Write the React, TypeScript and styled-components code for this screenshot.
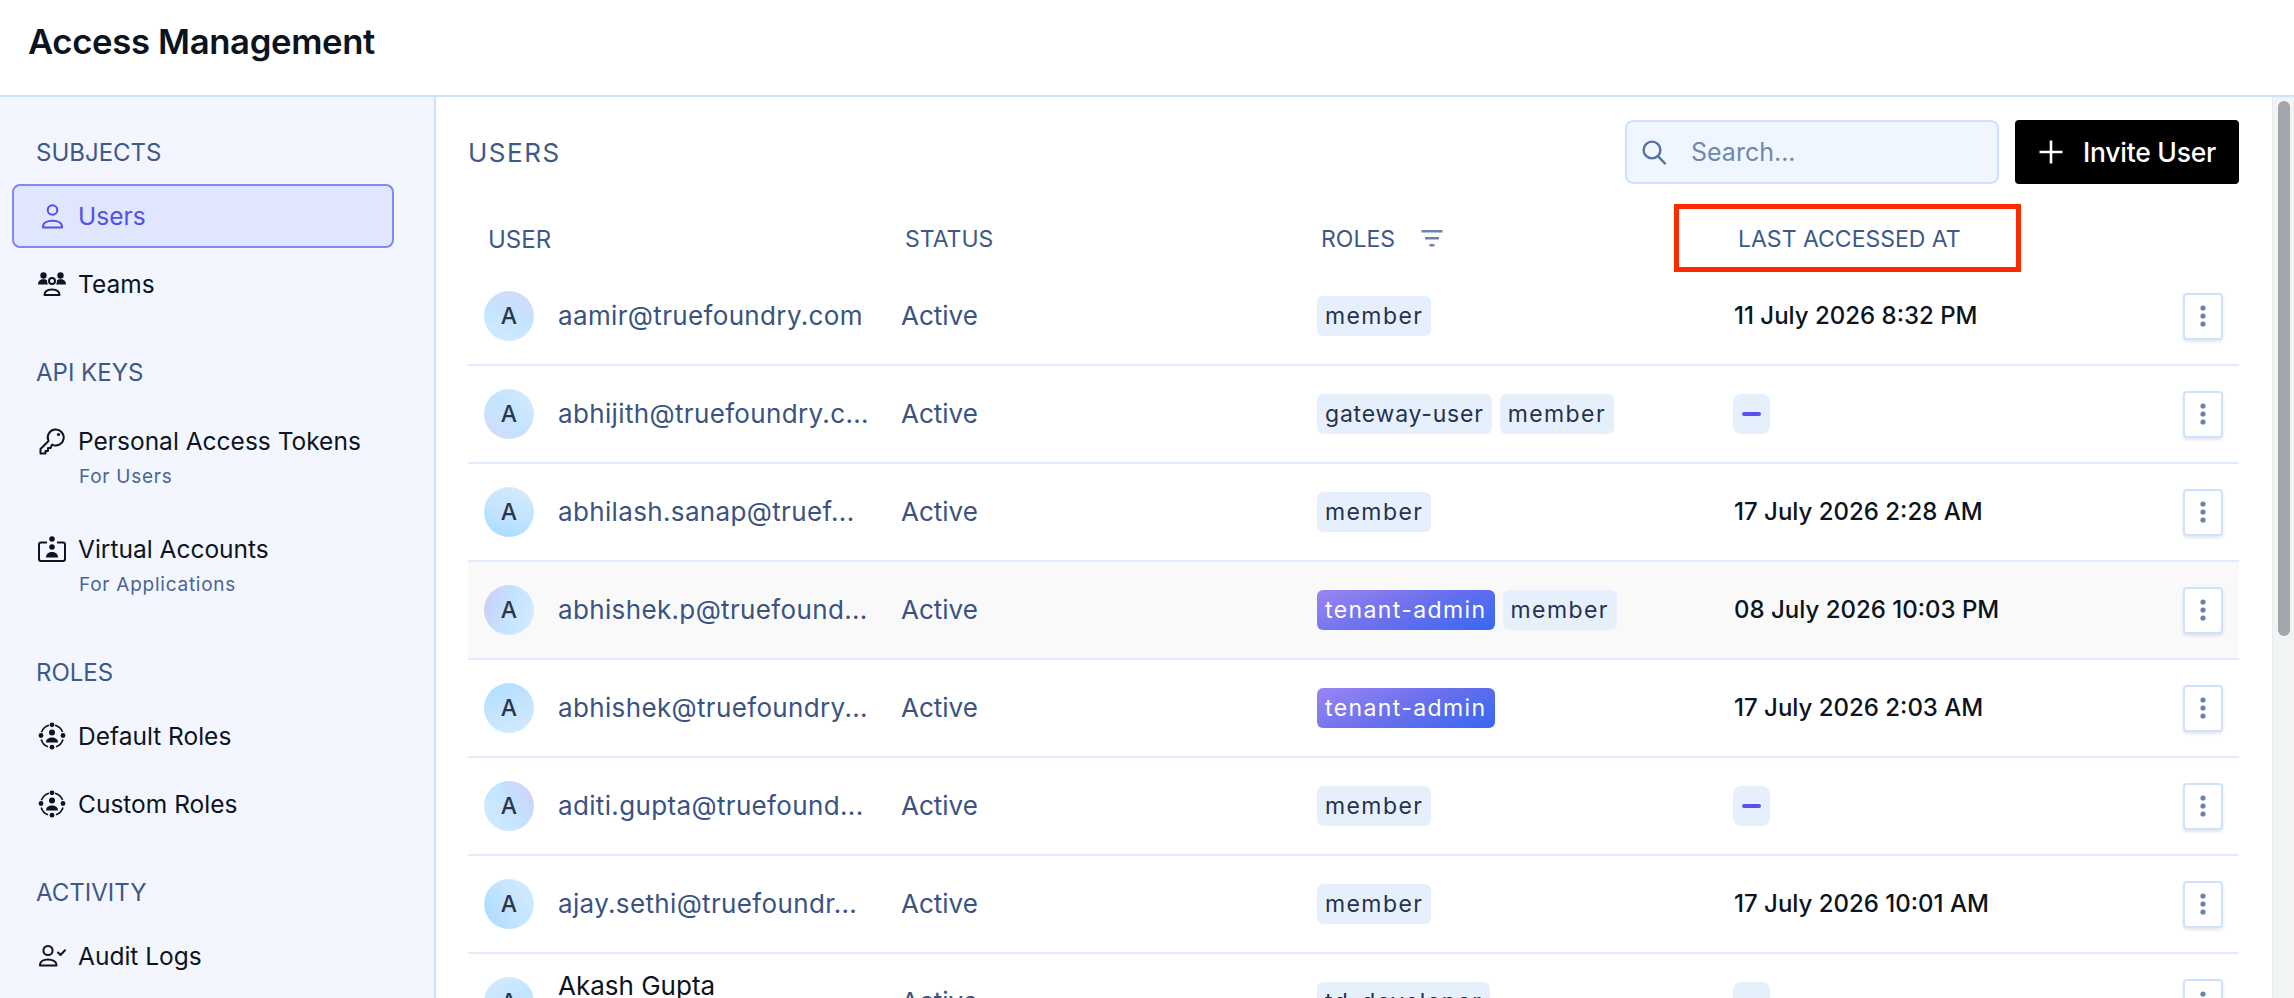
import React from "react";
import styled, { createGlobalStyle } from "styled-components";

const Global = createGlobalStyle`
  html, body { margin: 0; padding: 0; background: #fff; }
  body { font-family: Inter, "Noto Sans", sans-serif; overflow: hidden; }
  * { box-sizing: border-box; }
`;

const Page = styled.div`
  width: 2294px;
  height: 998px;
  display: flex;
  flex-direction: column;
  overflow: hidden;
`;
const TopBar = styled.header`
  height: 97px;
  flex: none;
  display: flex;
  align-items: center;
  padding: 0 0 13px 28px;
  border-bottom: 2px solid #cfe2fd;
`;
const Title = styled.h1`
  margin: 0;
  font-size: 34.7px;
  font-weight: 600;
  letter-spacing: -0.35px;
  color: #0b1420;
`;
const Body = styled.div`
  flex: 1;
  display: flex;
  min-height: 0;
`;
const Sidebar = styled.nav`
  width: 436px;
  flex: none;
  background: #f3f6ff;
  border-right: 2px solid #cfe2fd;
  padding: 37px 40px 0 12px;
  display: flex;
  flex-direction: column;
  gap: 38px;
`;
const Section = styled.section`
  display: flex;
  flex-direction: column;
  gap: 4px;
`;
const SectionLabel = styled.div`
  height: 36px;
  margin-bottom: 10px;
  padding-left: 24px;
  display: flex;
  align-items: center;
  font-size: 24px;
  font-weight: 400;
  color: #3d5987;
`;
const Item = styled.div<{ $active?: boolean }>`
  height: 64px;
  display: flex;
  align-items: center;
  gap: 12px;
  padding-left: 24px;
  border-radius: 8px;
  border: 2px solid ${(p) => (p.$active ? "#8088f5" : "transparent")};
  background: ${(p) => (p.$active ? "#e0e6fd" : "transparent")};
  color: ${(p) => (p.$active ? "#5350ea" : "#0b1420")};
  font-size: 24.5px;
  font-weight: 400;
`;
const TallItem = styled.div`
  height: 104px;
  padding: 17px 0 0 24px;
  border: 2px solid transparent;
  display: grid;
  grid-template-columns: 28px 1fr;
  grid-template-rows: 36px 34px;
  column-gap: 12px;
  align-items: center;
  color: #0b1420;
  font-size: 24.5px;
`;
const SubText = styled.div`
  grid-column: 2;
  padding-left: 1px;
  font-size: 19px;
  letter-spacing: 0.75px;
  color: #4a6592;
`;
const Main = styled.main`
  flex: 1;
  min-width: 0;
  padding: 23px 33px 0 32px;
`;
const Toolbar = styled.div`
  display: flex;
  align-items: center;
  gap: 16px;
  height: 64px;
`;
const Heading = styled.h2`
  margin: 0 auto 0 0;
  font-size: 26px;
  font-weight: 400;
  letter-spacing: 1.5px;
  color: #3d5987;
`;
const Search = styled.div`
  width: 374px;
  height: 64px;
  display: flex;
  align-items: center;
  gap: 24px;
  padding-left: 14px;
  background: #eff6ff;
  border: 2px solid #cfe2fd;
  border-radius: 8px;
  font-size: 25px;
  color: #7088ac;
`;
const InviteButton = styled.button`
  width: 224px;
  height: 64px;
  display: flex;
  align-items: center;
  gap: 20px;
  padding: 0 0 0 24px;
  background: #000;
  color: #fff;
  border: 0;
  border-radius: 4px;
  font-family: inherit;
  font-size: 26.5px;
  font-weight: 500;
  letter-spacing: -0.25px;
`;
const Columns = `433px 416px 417px 1fr 56px`;
const HeadRow = styled.div`
  display: grid;
  grid-template-columns: ${Columns};
  height: 36px;
  margin: 37px 0 11px;
  align-items: center;
  font-size: 23px;
  color: #3d5987;
`;
const HeadCell = styled.div`
  position: relative;
  height: 36px;
  display: flex;
  align-items: center;
  gap: 26px;
  padding-left: 4px;
`;
const UserHeadCell = styled(HeadCell)`
  padding-left: 20px;
  font-size: 24px;
`;
const Annotation = styled.div`
  position: absolute;
  left: -60px;
  top: -17px;
  width: 347px;
  height: 68px;
  border: 5px solid #ff2a00;
  pointer-events: none;
`;
const Row = styled.div<{ $hover?: boolean }>`
  display: grid;
  grid-template-columns: ${Columns};
  height: 98px;
  align-items: center;
  border-bottom: 2px solid #e0ebfd;
  background: ${(p) => (p.$hover ? "#f9f9f9" : "#fff")};
`;
const UserCell = styled.div`
  display: flex;
  align-items: center;
  gap: 24px;
  padding-left: 16px;
`;
const Avatar = styled.div<{ $end: string; $angle: number }>`
  width: 50px;
  height: 50px;
  flex: none;
  border-radius: 50%;
  display: flex;
  align-items: center;
  justify-content: center;
  background: linear-gradient(${(p) => p.$angle}deg, #d6ebfe 0%, #c3e4ff 50%, ${(p) => p.$end} 100%);
  font-size: 23px;
  font-weight: 500;
  color: #2d3648;
`;
const Email = styled.div`
  padding-bottom: 2px;
  font-size: 26px;
  letter-spacing: 0.35px;
  color: #3a5380;
  white-space: nowrap;
`;
const NameStack = styled.div`
  display: flex;
  flex-direction: column;
`;
const PersonName = styled.div`
  font-size: 26px;
  line-height: 36px;
  color: #0b1420;
`;
const Status = styled.div`
  padding-bottom: 2px;
  font-size: 26px;
  color: #3a5380;
`;
const Pills = styled.div`
  display: flex;
  gap: 8px;
`;
const Pill = styled.span<{ $admin?: boolean; $spacing: number }>`
  height: 40px;
  display: inline-flex;
  align-items: center;
  padding: 0 8px;
  border-radius: 6px;
  font-size: 23px;
  letter-spacing: ${(p) => p.$spacing}px;
  background: ${(p) => (p.$admin ? "linear-gradient(155deg, #9b85f3 0%, #6a70ec 50%, #3668f0 100%)" : "#e6f0fd")};
  color: ${(p) => (p.$admin ? "#fff" : "#27324a")};
`;
const DateText = styled.div`
  padding-bottom: 2px;
  font-size: 24px;
  font-weight: 500;
  color: #0b1420;
`;
const DashPill = styled.div`
  width: 37px;
  height: 40px;
  margin-left: -1px;
  display: flex;
  align-items: center;
  justify-content: center;
  border-radius: 8px;
  background: #e6f0fd;
`;
const Dash = styled.div`
  width: 19px;
  height: 4px;
  border-radius: 2px;
  background: #5b50ec;
`;
const Kebab = styled.button`
  width: 40px;
  height: 47px;
  padding: 0;
  display: flex;
  align-items: center;
  justify-content: center;
  background: #fff;
  border: 2px solid #cfe2fd;
  border-radius: 4px;
  box-shadow: 0 2px 3px rgba(30, 60, 120, 0.12);
`;
const ScrollTrack = styled.div`
  width: 22px;
  flex: none;
  background: #f2f4f4;
  border-left: 1px solid #e8ebeb;
  padding: 4px 4px 0 5px;
`;
const ScrollThumb = styled.div`
  height: 535px;
  border-radius: 6px;
  background: #a3a5ad;
`;

const Glyph = styled.svg`
  width: 28px;
  height: 28px;
  flex: none;
  display: block;
`;
const stroke = { fill: "none", stroke: "currentColor", strokeWidth: 2 } as const;

const UserIcon = () => (
  <Glyph viewBox="0 0 28 28">
    <circle cx="14.5" cy="8" r="4.8" {...stroke} />
    <path d="M5 25.5v-.8c0-3.7 4-6 9.5-6s9.5 2.3 9.5 6v.8z" {...stroke} strokeLinejoin="round" />
  </Glyph>
);
const TeamIcon = () => (
  <Glyph viewBox="0 0 28 28">
    <circle cx="14" cy="11" r="3" {...stroke} />
    <path d="M6.5 25c0-3.7 3.3-5.5 7.5-5.5s7.5 1.8 7.5 5.5z" {...stroke} strokeLinejoin="round" />
    <circle cx="5.5" cy="5.5" r="3.2" fill="currentColor" />
    <circle cx="22.5" cy="5.5" r="3.2" fill="currentColor" />
    <path d="M0 14.5c0-3.8 2.4-5.3 5.5-5.3 1.6 0 2.9.4 3.7 1.2-.3 1.6.1 3 1 4.1z" fill="currentColor" />
    <path d="M28 14.5c0-3.8-2.4-5.3-5.5-5.3-1.6 0-2.9.4-3.7 1.2.3 1.6-.1 3-1 4.1z" fill="currentColor" />
  </Glyph>
);
const KeyIcon = () => (
  <Glyph viewBox="0 0 28 28">
    <path d="M10.5 14L2.5 22V26.5H7.5V24H10V21H12.5L14 17.6A8 8 0 1 0 10.5 14Z" {...stroke} strokeLinejoin="round" />
    <circle cx="20.5" cy="7.5" r="1.6" fill="currentColor" />
  </Glyph>
);
const BadgeIcon = () => (
  <Glyph viewBox="0 0 28 28">
    <path d="M9 7.5H3a2 2 0 0 0-2 2V24a2 2 0 0 0 2 2h22a2 2 0 0 0 2-2V9.5a2 2 0 0 0-2-2h-6" {...stroke} />
    <circle cx="14" cy="4" r="2.8" fill="currentColor" />
    <circle cx="14" cy="12" r="2.8" fill="currentColor" />
    <path d="M8 22.5c0-4 3-5.5 6-5.5s6 1.5 6 5.5z" fill="currentColor" />
  </Glyph>
);
const RoleIcon = () => (
  <Glyph viewBox="0 0 28 28">
    <path d="M17 3.2A11.3 11.3 0 0 1 24.6 10M25 17.5A11.3 11.3 0 0 1 18 24.8M10 24.8A11.3 11.3 0 0 1 3.2 17.5M3.4 10.2A11.3 11.3 0 0 1 11 3.2" {...stroke} strokeWidth={1.7} />
    <circle cx="14" cy="2.8" r="2.4" fill="currentColor" />
    <circle cx="25" cy="13.5" r="2.4" fill="currentColor" />
    <circle cx="14" cy="25.2" r="2.4" fill="currentColor" />
    <circle cx="3" cy="13.5" r="2.4" fill="currentColor" />
    <circle cx="14" cy="10.5" r="3" fill="currentColor" />
    <path d="M8 20.5c0-3.6 3-5 6-5s6 1.4 6 5z" fill="currentColor" />
  </Glyph>
);
const AuditIcon = () => (
  <Glyph viewBox="0 0 28 28">
    <circle cx="10" cy="8.5" r="4.6" {...stroke} />
    <path d="M2 23.5v-.7c0-3.4 3.6-5.3 8-5.3s8.5 1.9 8.5 5.3v.7z" {...stroke} strokeLinejoin="round" />
    <path d="M20 10.5l2.5 2.5 4.5-4.7" {...stroke} strokeLinecap="round" strokeLinejoin="round" />
  </Glyph>
);
const SearchIcon = () => (
  <svg width="26" height="26" viewBox="0 0 26 26" fill="none" stroke="#5673a0" strokeWidth="2.4" strokeLinecap="round">
    <circle cx="11" cy="11" r="8.4" />
    <path d="M17.4 17.6L24 24.5" />
  </svg>
);
const PlusIcon = () => (
  <svg width="24" height="24" viewBox="0 0 24 24" fill="none" stroke="#fff" strokeWidth="2.6">
    <path d="M12 0.5v23M0.5 12h23" />
  </svg>
);
const FilterIcon = () => (
  <svg width="22" height="20" viewBox="0 0 22 20" fill="#6b83ab">
    <rect x="0.5" y="1" width="21" height="2.4" rx="0.6" />
    <rect x="4" y="8" width="14" height="2.4" rx="0.6" />
    <rect x="8.5" y="15" width="5" height="2.4" rx="0.6" />
  </svg>
);
const DotsIcon = () => (
  <svg width="6" height="22" viewBox="0 0 6 22" fill="#6b83ab">
    <circle cx="3" cy="3" r="2.6" />
    <circle cx="3" cy="11" r="2.6" />
    <circle cx="3" cy="19" r="2.6" />
  </svg>
);

type RowData = {
  email: string;
  roles: string[];
  date?: string;
  end: string;
  angle: number;
  name?: string;
  hover?: boolean;
};

const rows: RowData[] = [
  { email: "aamir@truefoundry.com", roles: ["member"], date: "11 July 2026 8:32 PM", end: "#d5d8f8", angle: 20 },
  { email: "abhijith@truefoundry.c...", roles: ["gateway-user", "member"], end: "#d3dcf8", angle: 230 },
  { email: "abhilash.sanap@truef...", roles: ["member"], date: "17 July 2026 2:28 AM", end: "#a5dcff", angle: 200 },
  { email: "abhishek.p@truefound...", roles: ["tenant-admin", "member"], date: "08 July 2026 10:03 PM", end: "#cfc9f8", angle: 290, hover: true },
  { email: "abhishek@truefoundry...", roles: ["tenant-admin"], date: "17 July 2026 2:03 AM", end: "#b0deff", angle: 340 },
  { email: "aditi.gupta@truefound...", roles: ["member"], end: "#d3cdf8", angle: 60 },
  { email: "ajay.sethi@truefoundr...", roles: ["member"], date: "17 July 2026 10:01 AM", end: "#a8dcff", angle: 240 },
  { name: "Akash Gupta", email: "akash.gupta@truef...", roles: ["td-developer"], end: "#d5d8f8", angle: 150 },
];

export default function App() {
  return (
    <Page>
      <Global />
      <TopBar>
        <Title>Access Management</Title>
      </TopBar>
      <Body>
        <Sidebar>
          <Section>
            <SectionLabel>SUBJECTS</SectionLabel>
            <Item $active><UserIcon />Users</Item>
            <Item><TeamIcon />Teams</Item>
          </Section>
          <Section>
            <SectionLabel>API KEYS</SectionLabel>
            <TallItem><KeyIcon />Personal Access Tokens<SubText>For Users</SubText></TallItem>
            <TallItem><BadgeIcon />Virtual Accounts<SubText>For Applications</SubText></TallItem>
          </Section>
          <Section>
            <SectionLabel>ROLES</SectionLabel>
            <Item><RoleIcon />Default Roles</Item>
            <Item><RoleIcon />Custom Roles</Item>
          </Section>
          <Section>
            <SectionLabel>ACTIVITY</SectionLabel>
            <Item><AuditIcon />Audit Logs</Item>
          </Section>
        </Sidebar>
        <Main>
          <Toolbar>
            <Heading>USERS</Heading>
            <Search><SearchIcon />Search...</Search>
            <InviteButton><PlusIcon />Invite User</InviteButton>
          </Toolbar>
          <HeadRow>
            <UserHeadCell>USER</UserHeadCell>
            <HeadCell>STATUS</HeadCell>
            <HeadCell>ROLES<FilterIcon /></HeadCell>
            <HeadCell>LAST ACCESSED AT<Annotation /></HeadCell>
            <div />
          </HeadRow>
          {rows.map((r) => (
            <Row key={r.email} $hover={r.hover}>
              <UserCell>
                <Avatar $end={r.end} $angle={r.angle}>A</Avatar>
                {r.name ? (
                  <NameStack>
                    <PersonName>{r.name}</PersonName>
                    <Email>{r.email}</Email>
                  </NameStack>
                ) : (
                  <Email>{r.email}</Email>
                )}
              </UserCell>
              <Status>Active</Status>
              <Pills>
                {r.roles.map((role) => (
                  <Pill key={role} $admin={role === "tenant-admin"} $spacing={role === "gateway-user" ? 0.8 : 1.4}>{role}</Pill>
                ))}
              </Pills>
              {r.date ? <DateText>{r.date}</DateText> : <DashPill><Dash /></DashPill>}
              <Kebab aria-label="More"><DotsIcon /></Kebab>
            </Row>
          ))}
        </Main>
        <ScrollTrack><ScrollThumb /></ScrollTrack>
      </Body>
    </Page>
  );
}
